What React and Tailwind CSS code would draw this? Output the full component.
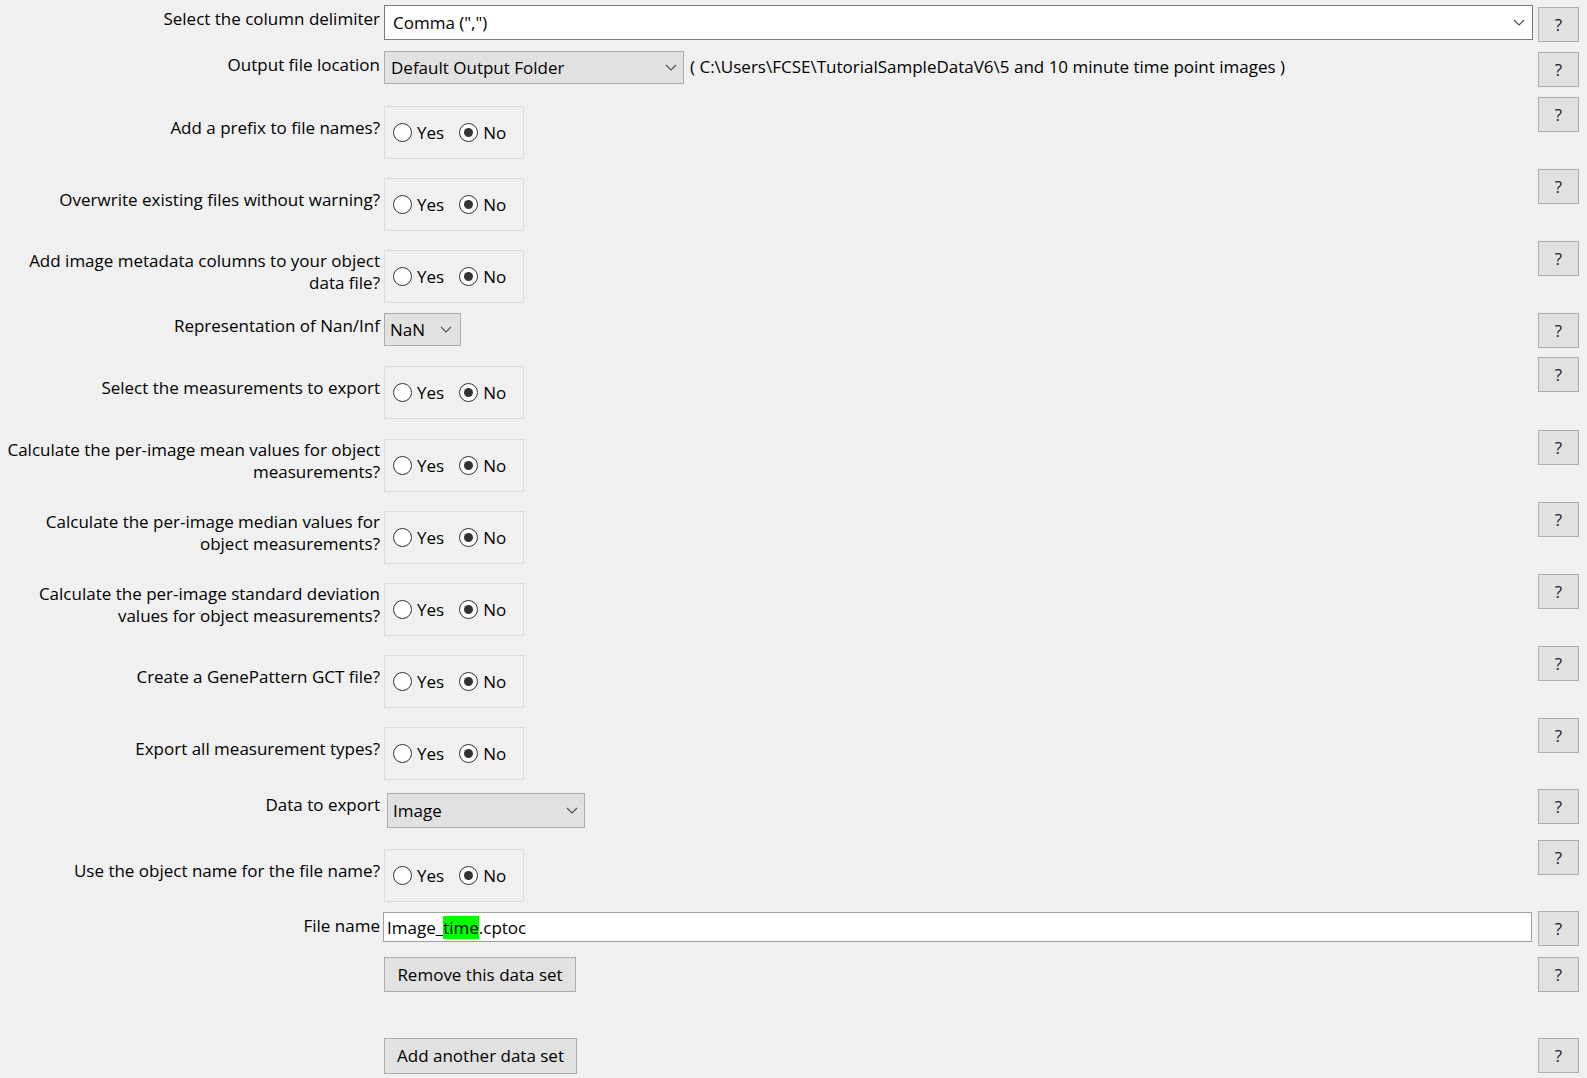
import React from "react";

function Chevron() {
  return (
    <svg width="12" height="7" viewBox="0 0 12 7" className="shrink-0">
      <polyline points="1,1 6,6 11,1" fill="none" stroke="#4d4d4d" strokeWidth="1.1" />
    </svg>
  );
}

function Help({ cls = "" }) {
  return (
    <div className={`w-[41px] h-[35px] bg-[#e1e1e1] border border-[#adadad] flex items-center justify-center text-[#1a1a2e] font-medium ${cls}`}>
      ?
    </div>
  );
}

function Radio({ checked }) {
  return (
    <span className="w-[19px] h-[19px] rounded-full border border-[#333] bg-white flex items-center justify-center shrink-0">
      {checked ? <span className="w-[9px] h-[9px] rounded-full bg-[#333]" /> : null}
    </span>
  );
}

function RadioBox() {
  return (
    <div className="mt-[9px] w-[140px] h-[53px] border border-[#dcdcdc] flex items-center">
      <span className="ml-[8px]"><Radio /></span>
      <span className="ml-[5px]">Yes</span>
      <span className="ml-[15px]"><Radio checked /></span>
      <span className="ml-[5px]">No</span>
    </div>
  );
}

function Row({ h, label, labelCls = "", children, helpCls = "" }) {
  return (
    <div className={`flex items-start ${h}`}>
      <div className={`w-[384px] pr-[4px] text-right whitespace-nowrap shrink-0 ${labelCls}`}>{label}</div>
      <div className="flex-1 min-w-0 flex items-start">{children}</div>
      <div className="w-[46px] pl-[5px] shrink-0">
        <Help cls={helpCls} />
      </div>
    </div>
  );
}

function RadioRow({ h, label }) {
  return (
    <Row
      h={h}
      label={<div className="h-[62px] flex items-center justify-end">{label}</div>}
    >
      <RadioBox />
    </Row>
  );
}

export default function App() {
  return (
    <div className="w-full h-[1078px] bg-[#f0f0f0] pt-[5px] pr-[8px] text-[17px] leading-[22px] text-[#000] font-['Open_Sans',sans-serif] overflow-hidden">
      <Row h="h-[46px]" label="Select the column delimiter" labelCls="mt-[3px]" helpCls="mt-[2px]">
        <div className="w-full h-[35px] bg-white border border-[#7a7a7a] flex items-center justify-between pl-[8px] pr-[7px]">
          <span>Comma (",")</span>
          <Chevron />
        </div>
      </Row>

      <Row h="h-[46px]" label="Output file location" labelCls="mt-[3px]" helpCls="mt-[1px]">
        <div className="w-[300px] h-[33px] bg-[#e1e1e1] border border-[#adadad] flex items-center justify-between pl-[6px] pr-[6px] shrink-0">
          <span>Default Output Folder</span>
          <Chevron />
        </div>
        <span className="ml-[6px] mt-[5px] whitespace-nowrap">
          {"( C:\\Users\\FCSE\\TutorialSampleDataV6\\5 and 10 minute time point images )"}
        </span>
      </Row>

      <RadioRow h="h-[72px]" label="Add a prefix to file names?" />
      <RadioRow h="h-[72px]" label="Overwrite existing files without warning?" />
      <RadioRow
        h="h-[72px]"
        label={<span>Add image metadata columns to your object<br />data file?</span>}
      />

      <Row h="h-[44px]" label="Representation of Nan/Inf" labelCls="mt-[2px]">
        <div className="w-[77px] h-[33px] bg-[#e1e1e1] border border-[#adadad] flex items-center justify-between pl-[5px] pr-[8px]">
          <span>NaN</span>
          <Chevron />
        </div>
      </Row>

      <RadioRow h="h-[73px]" label="Select the measurements to export" />
      <RadioRow
        h="h-[72px]"
        label={<span>Calculate the per-image mean values for object<br />measurements?</span>}
      />
      <RadioRow
        h="h-[72px]"
        label={<span>Calculate the per-image median values for<br />object measurements?</span>}
      />
      <RadioRow
        h="h-[72px]"
        label={<span>Calculate the per-image standard deviation<br />values for object measurements?</span>}
      />
      <RadioRow h="h-[72px]" label="Create a GenePattern GCT file?" />
      <RadioRow h="h-[71px]" label="Export all measurement types?" />

      <Row h="h-[51px]" label="Data to export" labelCls="mt-[5px]">
        <div className="ml-[3px] mt-[4px] w-[198px] h-[35px] bg-[#e1e1e1] border border-[#adadad] flex items-center justify-between pl-[5px] pr-[6px]">
          <span>Image</span>
          <Chevron />
        </div>
      </Row>

      <RadioRow h="h-[71px]" label="Use the object name for the file name?" />

      <Row h="h-[46px]" label="File name" labelCls="mt-[4px]">
        <div className="ml-[-1px] mt-[1px] w-full h-[30px] bg-white border border-[#a0a0a0] flex items-center pl-[3px]">
          <span className="whitespace-pre">
            Image_<span className="bg-[#00ff00] inline-block leading-[23px]">time</span>.cptoc
          </span>
        </div>
      </Row>

      <Row h="h-[81px]" label="">
        <div className="w-[192px] h-[35px] bg-[#e1e1e1] border border-[#adadad] flex items-center justify-center">
          Remove this data set
        </div>
      </Row>

      <Row h="h-[40px]" label="">
        <div className="w-[193px] h-[36px] bg-[#e1e1e1] border border-[#adadad] flex items-center justify-center">
          Add another data set
        </div>
      </Row>
    </div>
  );
}
